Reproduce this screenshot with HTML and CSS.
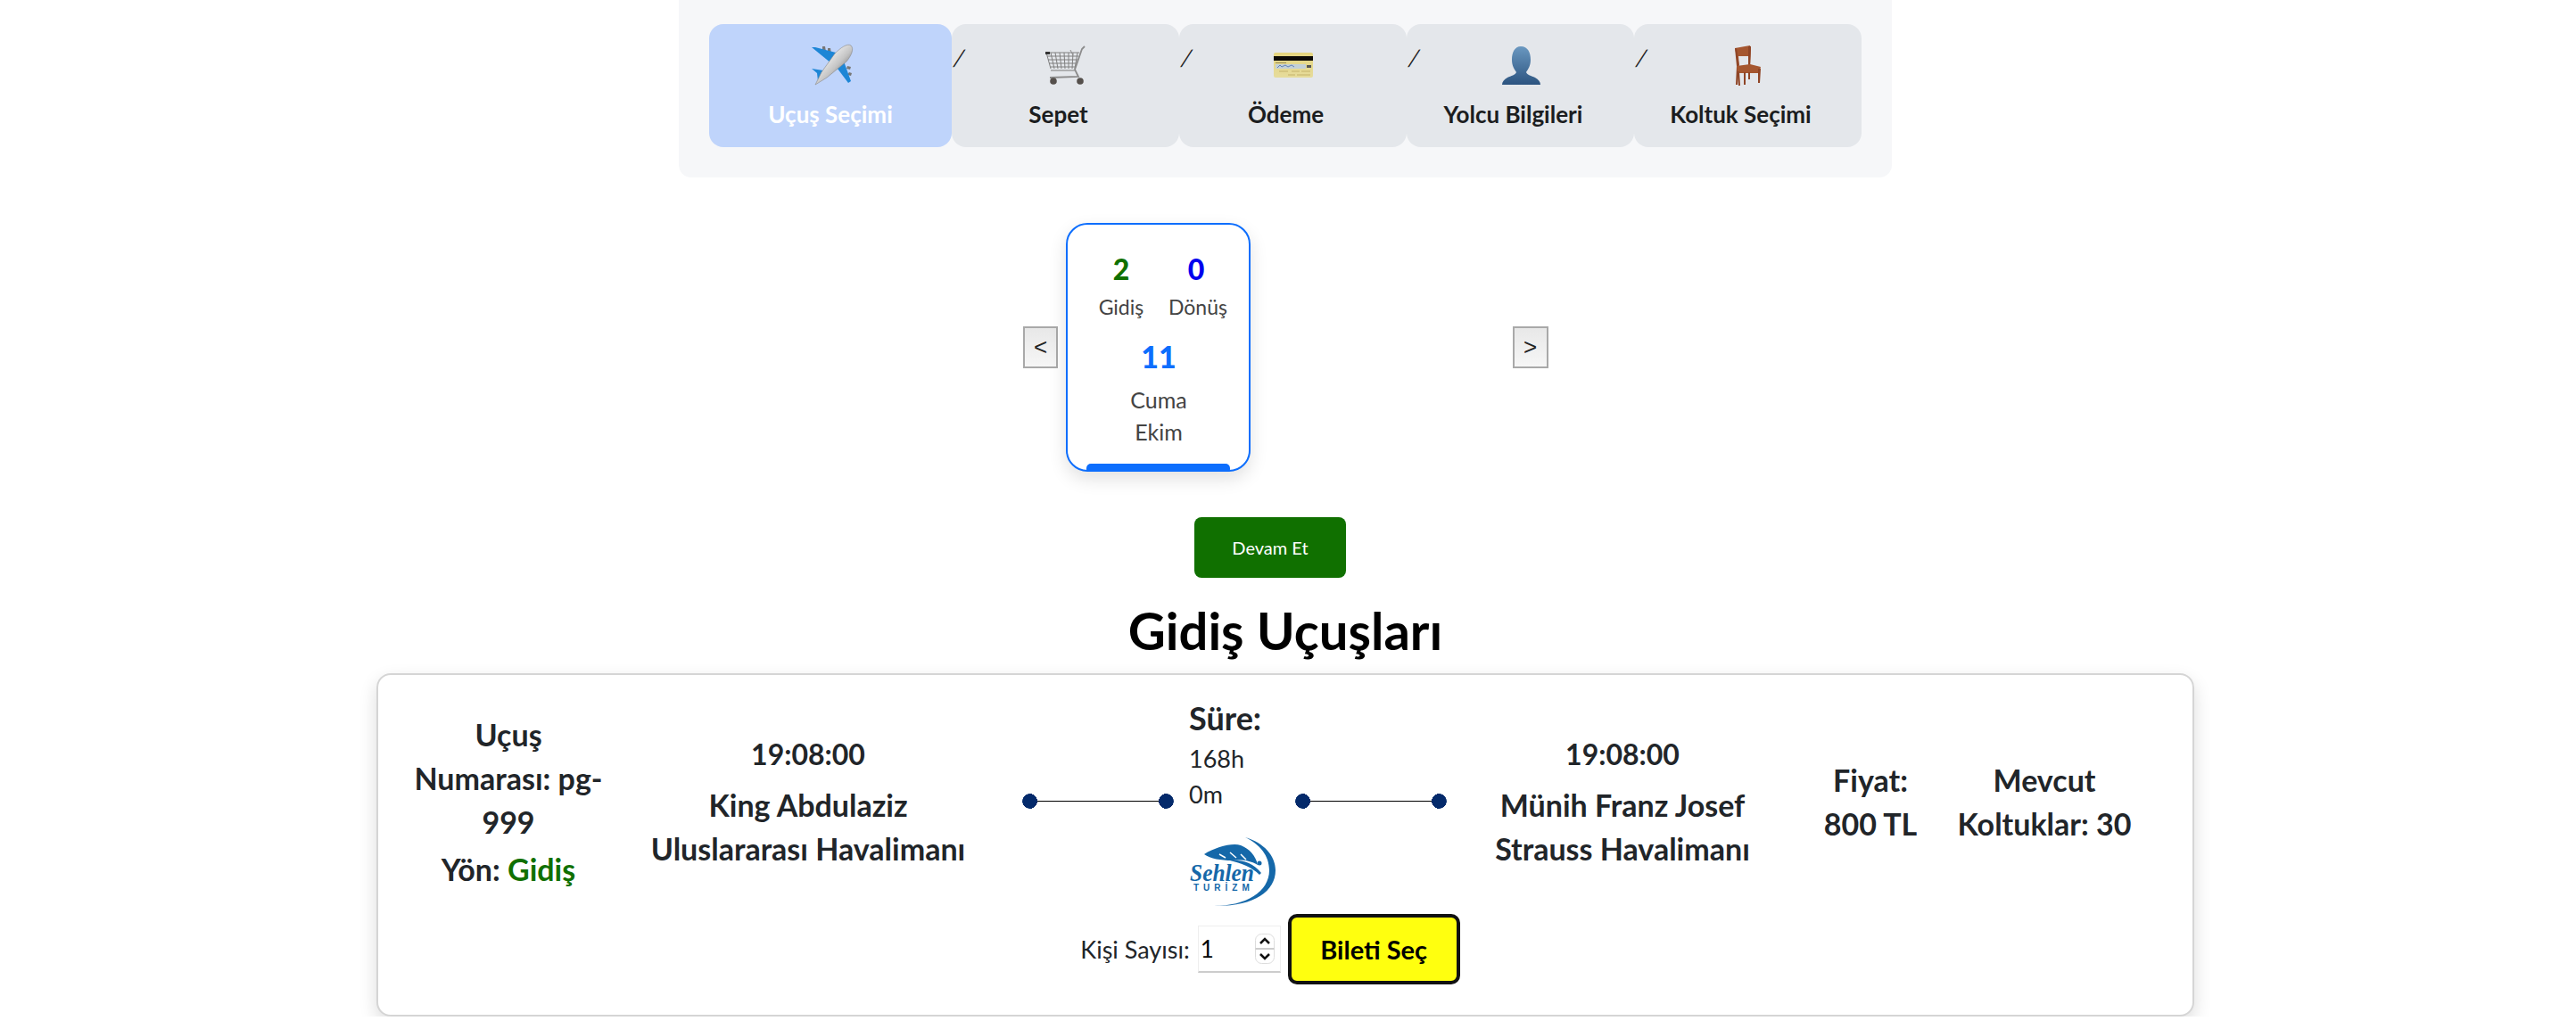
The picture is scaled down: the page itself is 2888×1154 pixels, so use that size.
FILE: index.html
```html
<!DOCTYPE html>
<html lang="tr">
<head>
    <meta charset="UTF-8">
    <title>Uçuş Seçimi</title>
    <link rel="stylesheet" href="styles.css">
</head>
<body>
    <div class="page">
        <nav class="steps">
            <div class="step step-active">
                <svg class="step-icon" viewBox="0 0 60 56">
                    <defs>
                        <linearGradient id="body" x1="0.300" y1="0.300" x2="0.800" y2="0.800">
                            <stop offset="0" stop-color="#eee"/>
                            <stop offset="0.500" stop-color="#c4c4c4"/>
                            <stop offset="1" stop-color="#6f6f6f"/>
                        </linearGradient>
                    </defs>
                    <path d="M21 8l3 0 1 6-4 -1zM27 10l3 0 1 7-4 -2zM49 30l4 1-1 3-4 -1zM51 37l3 1-1 3-4 -1z" fill="#777"/>
                    <path d="M9 9l4 0 27 7-9 11z" fill="#1d86d6"/>
                    <path d="M35 29l9-7 9 25-3 2z" fill="#1d86d6"/>
                    <path d="M9 33l13 2-4 12-2 0-1-9z" fill="#1d86d6"/>
                    <path d="M53 7c4 4 0 12-5 18L26 43l-13 8 7-14 15-21c6-6 14-12 18-9z" fill="url(#body)" stroke="#8a8a8a" stroke-width="0.600"/>
                </svg>
                <span class="step-label">Uçuş Seçimi</span>
            </div>
            <div class="step">
                <svg class="step-icon" viewBox="0 0 60 56">
                    <g fill="none" stroke="#808080" stroke-width="1">
                        <path d="M8 15h37M9 19h35M10 23h33M11 27h31M13 31h28"/>
                        <path d="M8 15l5 18M13 15l4 18M18 15l3 18M23 15l2 18M28 15l1 18M33 15v18M38 15l-1 18M43 15l-3 18"/>
                    </g>
                    <rect x="7" y="14" width="5" height="3" fill="#333"/>
                    <path d="M51 8l-3 3-8 23 4 8-32 1" fill="none" stroke="#8c8c8c" stroke-width="1.800"/>
                    <path d="M13 35h27" fill="none" stroke="#999" stroke-width="1.400"/>
                    <path d="M35 12l3 6" fill="none" stroke="#8c8c8c"/>
                    <circle cx="16" cy="47" r="3.800" fill="#55504c"/>
                    <circle cx="46" cy="47" r="3.800" fill="#55504c"/>
                </svg>
                <span class="step-label">Sepet</span>
            </div>
            <div class="step">
                <svg class="step-icon" viewBox="0 0 60 56">
                    <defs>
                        <linearGradient id="gold" x1="0" y1="0" x2="0" y2="1">
                            <stop offset="0" stop-color="#e4d47e"/>
                            <stop offset="1" stop-color="#e6dc9c"/>
                        </linearGradient>
                    </defs>
                    <rect x="8" y="15" width="44" height="28" rx="2" fill="url(#gold)"/>
                    <rect x="8" y="19" width="44" height="5" fill="#0c0a06"/>
                    <rect x="10" y="26" width="12" height="1" fill="#9a8d55"/>
                    <rect x="10" y="28" width="34" height="5" fill="#c3d0d6"/>
                    <path d="M12 32l3-3 2 2 4-2 3 2 4-2 3 2" fill="none" stroke="#5577b5" stroke-width="0.900"/>
                    <rect x="45" y="29" width="5" height="3" fill="#555"/>
                    <path d="M14 36h10M28 36h9M39 36h10M24 40h8M34 40h15" stroke="#cfc07a" stroke-width="1.400"/>
                </svg>
                <span class="step-label">Ödeme</span>
            </div>
            <div class="step">
                <svg class="step-icon" viewBox="0 0 60 56">
                    <defs>
                        <linearGradient id="bust" x1="0" y1="0" x2="0" y2="1">
                            <stop offset="0" stop-color="#6a98c0"/>
                            <stop offset="1" stop-color="#2c5480"/>
                        </linearGradient>
                    </defs>
                    <path d="M30 8c8 0 11 7 11 15 0 7-3 11-5 14 1 3 6 4 10 6 4 2 6 5 6 8H9c0-3 2-6 6-8 4-2 9-3 10-6-2-3-5-7-5-14 0-8 3-15 10-15z" fill="url(#bust)"/>
                </svg>
                <span class="step-label">Yolcu Bilgileri</span>
            </div>
            <div class="step">
                <svg class="step-icon" viewBox="0 0 60 56">
                    <path d="M15 10l17-3 1 4-1 18H19z" fill="#a5562f"/>
                    <path d="M19 19h12.500l0.500 11H20z" fill="#e4e6eb"/>
                    <path d="M15 10l2 0 3 21-2 20-2 0 1-21z" fill="#8f4526"/>
                    <path d="M30 8l3 0-1 24h-2z" fill="#8f4526"/>
                    <path d="M17 30l15-2 12 3-2 7-24 0z" fill="#a5562f"/>
                    <path d="M18 36h2l1 16h-2zM25 37h2v14h-2zM41 33h3l-1 16h-2zM30 37h2v8h-2z" fill="#8f4526"/>
                </svg>
                <span class="step-label">Koltuk Seçimi</span>
            </div>
        </nav>

        <div class="carousel">
            <button class="carousel-btn" type="button">&lt;</button>
            <div class="carousel-track">
                <div class="day-card">
                    <div class="counts">
                        <div class="count">
                            <div class="count-num num-green">2</div>
                            <div class="count-label">Gidiş</div>
                        </div>
                        <div class="count">
                            <div class="count-num num-blue">0</div>
                            <div class="count-label">Dönüş</div>
                        </div>
                    </div>
                    <div class="day-num">11</div>
                    <div class="day-text">Cuma</div>
                    <div class="day-text">Ekim</div>
                    <div class="day-bar"></div>
                </div>
            </div>
            <button class="carousel-btn" type="button">&gt;</button>
        </div>

        <div class="continue-row">
            <button class="continue-btn" type="button">Devam Et</button>
        </div>

        <h1 class="section-title">Gidiş Uçuşları</h1>

        <div class="flight-card">
            <div class="flight-top">
                <div class="flight-col col-no">
                    <div>Uçuş Numarası: pg-999</div>
                    <div class="dir-line">Yön: <span class="dir-green">Gidiş</span></div>
                </div>
                <div class="flight-col col-airport">
                    <div class="time">19:08:00</div>
                    <div>King Abdulaziz Uluslararası Havalimanı</div>
                </div>
                <div class="route">
                    <div class="route-line"></div>
                    <div class="duration">
                        <div class="duration-title">Süre:</div>
                        <div class="duration-val">168h</div>
                        <div class="duration-val">0m</div>
                        <svg class="airline-logo" viewBox="0 0 97 79">
                            <path d="M63 1C84 7 97 22 97 38 97 62 72 79 28 78c36 0 62-16 62-40C90 22 80 9 63 1z" fill="#1568a9"/>
                            <path d="M17 20C30 12 48 7 58 10c10 4 17 12 19 22-10-6-20-6-29-5-12 0-24-2-31-7z" fill="#1568a9"/>
                            <path d="M34 20l7 4M46 18l7 6M58 20l6 6" stroke="#fff" stroke-width="1.500"/>
                            <path d="M46 27c14-1 26 3 35 14l-2 2C70 34 58 30 46 27z" fill="#1568a9"/>
                            <circle cx="79" cy="30" r="2.500" fill="#1568a9"/>
                            <text class="logo-name" x="1" y="50" textLength="72" lengthAdjust="spacingAndGlyphs">Sehlen</text>
                            <text class="logo-sub" x="5" y="61">TURİZM</text>
                        </svg>
                    </div>
                    <div class="route-line"></div>
                </div>
                <div class="flight-col col-airport-to">
                    <div class="time">19:08:00</div>
                    <div>Münih Franz Josef Strauss Havalimanı</div>
                </div>
                <div class="flight-col col-price">Fiyat: 800 TL</div>
                <div class="flight-col col-seats">Mevcut Koltuklar: 30</div>
            </div>
            <div class="seat-row">
                <label class="seat-label" for="seat_count">Kişi Sayısı:</label>
                <div class="seat-box">
                    <input class="seat-input" type="number" id="seat_count" name="seat_count" value="1">
                    <svg class="seat-spin" viewBox="0 0 22 34">
                        <rect x="0.500" y="0.500" width="21" height="33" rx="7" fill="#fff" stroke="#ddd"/>
                        <path d="M0.500 17h21" stroke="#ccc" stroke-width="2"/>
                        <path d="M6 11l5-5 5 5M6 23l5 5 5-5" fill="none" stroke="#111" stroke-width="2.500"/>
                    </svg>
                </div>
                <button class="select-btn" type="button">Bileti Seç</button>
            </div>
        </div>
    </div>
</body>
</html>
```

FILE: styles.css
```css
body {
    margin: 0;
    font-family: "Lato", "Open Sans", sans-serif;
    background-color: #fff;
    color: #212529;
}
.page {
    width: 2882px;
}

/* steps */
.steps {
    width: 1360px;
    box-sizing: border-box;
    margin: 0 auto;
    padding: 27px 34px 34px;
    background-color: #f6f7f9;
    border-radius: 0 0 14px 14px;
    display: grid;
    grid-template-columns: 272px repeat(4, 255px);
}
.step {
    height: 138px;
    background-color: #e4e7eb;
    border-radius: 16px;
    display: flex;
    flex-direction: column;
    align-items: center;
    position: relative;
    font-size: 26px;
    font-weight: 700;
    color: #1b1d20;
}
.step + .step::before {
    content: "/";
    position: absolute;
    left: 3px;
    top: 22px;
    font-size: 25px;
    font-weight: 400;
    color: #222;
    transform: skewX(-14deg);
}
.step + .step .step-label {
    margin-right: 16px;
}
.step-active {
    background-color: #bfd4fb;
    color: #fff;
}
.step-icon {
    width: 60px;
    height: 56px;
    margin-top: 17px;
}
.step-label {
    margin-top: 13px;
    line-height: 30px;
}

/* date carousel */
.carousel {
    width: 589px;
    height: 279px;
    margin: 51px auto 0;
    display: flex;
    align-items: center;
    gap: 9px;
}
.carousel-btn {
    width: 40px;
    height: 47px;
    padding: 0;
    border: 2px solid #a9a9a9;
    background: linear-gradient(#e8e8e8, #f6f6f6);
    font-family: "Liberation Sans", sans-serif;
    font-size: 26px;
    color: #222;
}
.carousel-track {
    width: 492px;
    height: 100%;
}
.day-card {
    width: 207px;
    height: 279px;
    box-sizing: border-box;
    border: 2px solid #0d6efd;
    border-radius: 24px;
    background-color: #fff;
    box-shadow: 0 8px 20px rgba(0, 0, 0, 0.12);
    text-align: center;
    position: relative;
    overflow: hidden;
}
.counts {
    display: flex;
    justify-content: center;
    gap: 22px;
    margin-top: 32px;
}
.count {
    width: 62px;
}
.count-num {
    font-size: 32px;
    font-weight: 900;
    line-height: 36px;
}
.num-green {
    color: #107000;
}
.num-blue {
    color: #0000ee;
}
.count-label {
    font-size: 23px;
    line-height: 30px;
    margin-top: 9px;
    color: #444;
}
.day-num {
    font-size: 34px;
    font-weight: 900;
    line-height: 40px;
    margin-top: 21px;
    color: #0d6efd;
}
.day-text {
    font-size: 25px;
    line-height: 36px;
    color: #444;
}
.day-num + .day-text {
    margin-top: 10px;
}
.day-bar {
    position: absolute;
    left: 21px;
    right: 21px;
    bottom: 0;
    height: 7px;
    border-radius: 5px 5px 0 0;
    background-color: #0d6efd;
}

/* continue */
.continue-row {
    display: flex;
    justify-content: center;
    padding-right: 34px;
    margin-top: 51px;
}
.continue-btn {
    width: 170px;
    height: 68px;
    border: none;
    border-radius: 8px;
    background-color: #107000;
    color: #fff;
    font-family: inherit;
    font-size: 20px;
}

/* flight list */
.section-title {
    margin: 0;
    height: 107px;
    line-height: 118px;
    text-align: center;
    font-size: 58px;
    font-weight: 700;
    color: #000;
}
.flight-card {
    width: 2038px;
    box-sizing: border-box;
    margin: 0 auto;
    padding: 23px 0 34px 26px;
    border: 2px solid #d5d5d5;
    border-radius: 16px;
    background-color: #fff;
    box-shadow: 0 8px 20px rgba(0, 0, 0, 0.14);
}
.flight-top {
    display: flex;
    align-items: center;
    height: 237px;
    font-size: 34px;
    font-weight: 700;
    line-height: 49px;
    text-align: center;
}
.flight-col {
    box-sizing: border-box;
    flex: none;
}
.col-no {
    width: 240px;
    padding: 0 8px;
}
.dir-line {
    margin-top: 4px;
}
.col-airport {
    width: 400px;
    margin-left: 16px;
    padding: 0 10px;
}
.col-airport-to {
    width: 358px;
    margin-left: 18px;
}
.col-price {
    width: 120px;
    margin-left: 39px;
}
.col-seats {
    width: 220px;
    margin-left: 25px;
}
.time {
    font-size: 32px;
    margin-bottom: 8px;
}
.dir-green {
    color: #107000;
}
.route {
    display: flex;
    align-items: center;
    gap: 17px;
    margin-left: 40px;
    text-align: left;
}
.route-line {
    width: 170px;
    height: 17px;
    border-radius: 9px;
    background:
        radial-gradient(circle 8.500px at 8.500px 8.500px, #042a6b 98%, transparent),
        radial-gradient(circle 8.500px at 161.500px 8.500px, #042a6b 98%, transparent),
        linear-gradient(#000, #000) center / 100% 1px no-repeat;
}
.duration {
    width: 102px;
}
.duration-title {
    font-size: 36px;
    line-height: 51px;
}
.duration-val {
    font-size: 27px;
    font-weight: 400;
    line-height: 40px;
}
.airline-logo {
    display: block;
    width: 97px;
    height: 79px;
    margin-top: 27px;
}
.logo-name {
    font-family: "Liberation Serif", serif;
    font-style: italic;
    font-size: 27px;
    font-weight: 700;
    fill: #1568a9;
}
.logo-sub {
    font-family: "Liberation Sans", sans-serif;
    font-size: 10px;
    letter-spacing: 5px;
    fill: #1568a9;
}
.seat-row {
    display: flex;
    align-items: center;
    justify-content: center;
    height: 79px;
    margin-top: 8px;
    padding-right: 60px;
}
.seat-label {
    font-size: 27px;
    margin-right: 9px;
}
.seat-box {
    width: 93px;
    height: 53px;
    box-sizing: border-box;
    border: 1px solid #eee;
    border-bottom: 2px solid #ccc;
    display: flex;
    align-items: center;
    margin-right: 8px;
}
.seat-input {
    width: 60px;
    border: none;
    padding: 0 0 0 2px;
    outline: none;
    font-family: inherit;
    font-size: 26px;
    -moz-appearance: textfield;
    appearance: textfield;
}
.seat-spin {
    width: 22px;
    height: 34px;
    margin-left: 1px;
}
.select-btn {
    width: 193px;
    height: 79px;
    border: 4px solid #111;
    border-radius: 10px;
    background-color: #ffff0f;
    color: #000;
    font-family: inherit;
    font-size: 29px;
    font-weight: 700;
}
```
